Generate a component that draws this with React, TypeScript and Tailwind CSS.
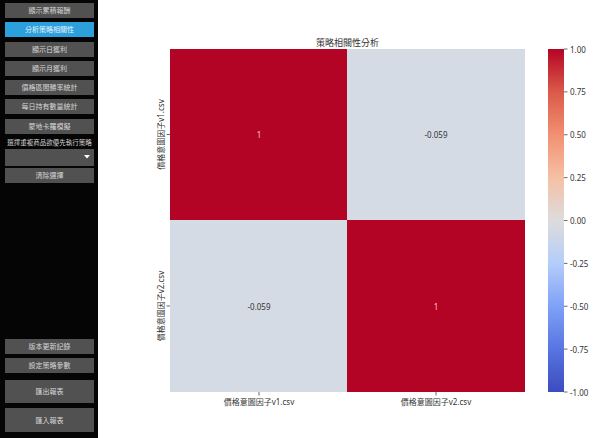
import React from "react";

const Btn = ({ label, active = false, h = "h-[15px]", mt = "" }: { label: string; active?: boolean; h?: string; mt?: string }) => (
  <div
    className={`${h} ${mt} w-full flex items-center justify-center text-[7px] leading-none ${
      active ? "bg-[#2ca0dc] text-[#e8f4fb]" : "bg-[#515151] text-[#d6d6d6]"
    }`}
  >
    {label}
  </div>
);

const ticks = ["1.00", "0.75", "0.50", "0.25", "0.00", "-0.25", "-0.50", "-0.75", "-1.00"];

export default function App() {
  const red = "#b40426";
  const grey = "#d5dbe5";
  return (
    <div className="w-[600px] h-[438px] flex bg-white font-['Noto_Sans','Noto_Sans_CJK_TC',sans-serif] overflow-hidden">
      <div className="w-[98px] h-full bg-[#050505] pl-[5px] pr-[4px] pt-[3px] pb-[6px] flex flex-col justify-between">
        <div className="flex flex-col">
          <div className="flex flex-col gap-[4.3px]">
            <Btn label="顯示累積報酬" />
            <Btn label="分析策略相關性" active />
            <Btn label="顯示日獲利" />
            <Btn label="顯示月獲利" />
            <Btn label="價格區間勝率統計" />
            <Btn label="每日持有數量統計" />
            <Btn label="蒙地卡羅模擬" />
          </div>
          <div className="h-[12px] mt-[3px] flex items-center justify-center text-[6.5px] leading-none text-[#d6d6d6] whitespace-nowrap">
            選擇重複商品欲優先執行策略
          </div>
          <div className="h-[17px] w-full bg-[#515151] flex items-center justify-end pr-[4px]">
            <svg width="6" height="4" viewBox="0 0 6 4">
              <polygon points="0,0 6,0 3,3.5" fill="#ffffff" />
            </svg>
          </div>
          <Btn label="清除選擇" mt="mt-[2.5px]" />
        </div>
        <div className="flex flex-col">
          <Btn label="版本更新記錄" />
          <Btn label="設定策略參數" mt="mt-[4px]" />
          <Btn label="匯出報表" h="h-[23px]" mt="mt-[7px]" />
          <Btn label="匯入報表" h="h-[24px]" mt="mt-[5px]" />
        </div>
      </div>
      <div className="flex-1 h-full">
        <svg width="502" height="438" viewBox="0 0 502 438" className="block">
          <defs>
            <linearGradient id="cw" x1="0" y1="0" x2="0" y2="1">
              <stop offset="0" stopColor="#b40426" />
              <stop offset="0.125" stopColor="#da5a49" />
              <stop offset="0.25" stopColor="#f29072" />
              <stop offset="0.375" stopColor="#f5c0a5" />
              <stop offset="0.5" stopColor="#dddcdc" />
              <stop offset="0.625" stopColor="#b4cdfa" />
              <stop offset="0.75" stopColor="#7fa1f7" />
              <stop offset="0.875" stopColor="#5875e1" />
              <stop offset="1" stopColor="#3b4cc0" />
            </linearGradient>
          </defs>
          <text x="249.5" y="42" fontSize="9" fill="#333" textAnchor="middle" dominantBaseline="central">
            策略相關性分析
          </text>
          <rect x="72" y="49" width="177" height="171" fill={red} />
          <rect x="249" y="49" width="178" height="171" fill={grey} />
          <rect x="72" y="220" width="177" height="172" fill={grey} />
          <rect x="249" y="220" width="178" height="172" fill={red} />
          <text x="161" y="134.5" fontSize="8" fill="#f4c6cd" textAnchor="middle" dominantBaseline="central">1</text>
          <text x="338" y="134.5" fontSize="8" fill="#333" textAnchor="middle" dominantBaseline="central">-0.059</text>
          <text x="161" y="306" fontSize="8" fill="#333" textAnchor="middle" dominantBaseline="central">-0.059</text>
          <text x="338" y="306" fontSize="8" fill="#f4c6cd" textAnchor="middle" dominantBaseline="central">1</text>
          <line x1="68.5" x2="72" y1="134.5" y2="134.5" stroke="#444" strokeWidth="0.8" />
          <line x1="68.5" x2="72" y1="306" y2="306" stroke="#444" strokeWidth="0.8" />
          <text x="62" y="134.5" fontSize="8" fill="#333" textAnchor="middle" dominantBaseline="central" transform="rotate(-90 62 134.5)">
            價格意圖因子v1.csv
          </text>
          <text x="62" y="306" fontSize="8" fill="#333" textAnchor="middle" dominantBaseline="central" transform="rotate(-90 62 306)">
            價格意圖因子v2.csv
          </text>
          <line x1="161" x2="161" y1="392" y2="395.5" stroke="#444" strokeWidth="0.8" />
          <line x1="338" x2="338" y1="392" y2="395.5" stroke="#444" strokeWidth="0.8" />
          <text x="161" y="401" fontSize="8" fill="#333" textAnchor="middle" dominantBaseline="central">價格意圖因子v1.csv</text>
          <text x="338" y="401" fontSize="8" fill="#333" textAnchor="middle" dominantBaseline="central">價格意圖因子v2.csv</text>
          <rect x="450" y="49" width="16" height="343" fill="url(#cw)" />
          {ticks.map((t, i) => {
            const y = 49 + (343 / 8) * i;
            return (
              <g key={t}>
                <line x1="466" x2="469.5" y1={y} y2={y} stroke="#444" strokeWidth="0.8" />
                <text x="472" y={y} fontSize="8" fill="#333" dominantBaseline="central">{t}</text>
              </g>
            );
          })}
        </svg>
      </div>
    </div>
  );
}
